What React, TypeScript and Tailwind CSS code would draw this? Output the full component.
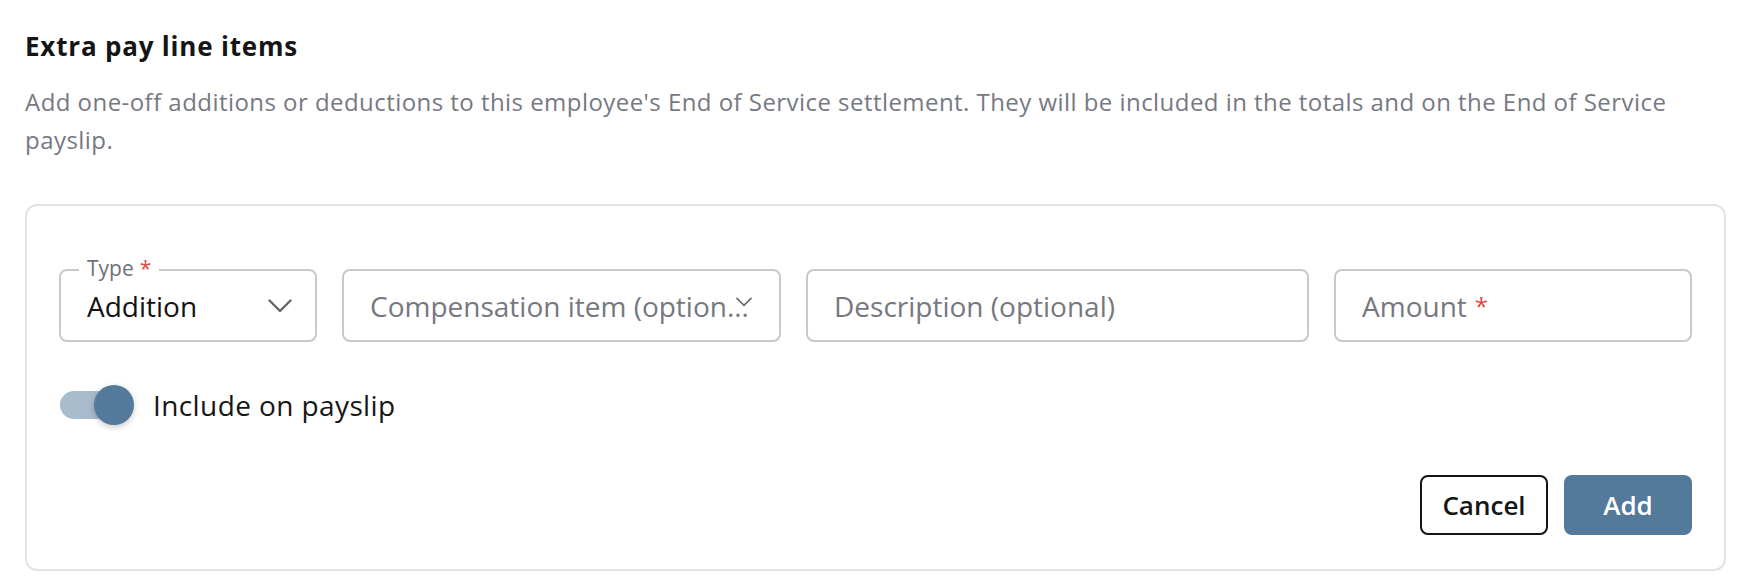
import { useState } from "react";

function Chevron({ className }: { className?: string }) {
    return (
        <svg viewBox="0 0 24 14" fill="none" className={className}>
            <path d="M1.5 1.5 L12 12 L22.5 1.5" stroke="currentColor" strokeWidth="2.4" strokeLinecap="round" strokeLinejoin="round" />
        </svg>
    );
}

function Required() {
    return <span className="ml-[8px] text-[#e0483e]">*</span>;
}

export default function App() {
    const [onPayslip, setOnPayslip] = useState(true);

    return (
        <div className="h-[584px] w-full bg-white pl-[25px] pr-[18px] pt-[30px] font-['Open_Sans',sans-serif]">
            <h2 className="text-[26px] font-bold leading-[32px] tracking-[0.8px] text-[#151515]">Extra pay line items</h2>
            <p className="mt-[21px] text-[24px] leading-[38px] tracking-[0.45px] text-[#767982]">
                Add one-off additions or deductions to this employee's End of Service settlement. They will be included in the totals and on the End of Service payslip.
            </p>

            <div className="mt-[45px] rounded-[12px] border-2 border-[#e3e3e3] px-[32px] pb-[34px] pt-[63px]">
                <div className="grid grid-cols-[258px_439px_503px_1fr] gap-[25px]">
                    <div className="relative flex h-[73px] items-center rounded-[8px] border-2 border-[#c9c9c9] pl-[26px] pr-[60px]">
                        <span className="absolute -top-[13px] left-[18px] bg-white px-[8px] text-[21px] leading-[21px] text-[#6d7079]">
                            Type<span className="ml-[6px] text-[#e0483e]">*</span>
                        </span>
                        <span className="text-[28px] text-[#121212]">Addition</span>
                        <Chevron className="absolute right-[23px] top-[28px] h-[14px] w-[24px] text-[#666666]" />
                    </div>

                    <div className="relative flex h-[73px] items-center rounded-[8px] border-2 border-[#c9c9c9] pl-[26px] pr-[27px]">
                        <span className="truncate text-[28px] text-[#76787f]">Compensation item (optional)</span>
                        <Chevron className="absolute right-[27px] top-[26px] h-[10px] w-[16px] text-[#6a6a6a]" />
                    </div>

                    <div className="flex h-[73px] items-center rounded-[8px] border-2 border-[#c9c9c9] px-[26px]">
                        <span className="text-[28px] text-[#76787f]">Description (optional)</span>
                    </div>

                    <div className="flex h-[73px] items-center rounded-[8px] border-2 border-[#c9c9c9] px-[26px]">
                        <span className="text-[28px] text-[#76787f]">
                            Amount
                            <span className="relative -top-[2px] text-[24px]">
                                <Required />
                            </span>
                        </span>
                    </div>
                </div>

                <div className="mt-[43px] flex h-[40px] items-center gap-[19px] pl-[1px]">
                    <button
                        type="button"
                        onClick={() => setOnPayslip(!onPayslip)}
                        className="relative h-[40px] w-[74px]"
                    >
                        <span
                            className={`absolute left-0 top-[6px] h-[28px] w-[68px] rounded-full ${onPayslip ? "bg-[#a9bccd]" : "bg-[#c4c4c4]"}`}
                        />
                        <span
                            className={`absolute top-0 h-[40px] w-[40px] rounded-full shadow-[0_2px_6px_rgba(0,0,0,0.22)] ${onPayslip ? "left-[34px] bg-[#537a9b]" : "left-0 bg-white"}`}
                        />
                    </button>
                    <span className="text-[28px] leading-[40px] tracking-[0.4px] text-[#161616]">Include on payslip</span>
                </div>

                <div className="mt-[50px] flex justify-end gap-[16px]">
                    <button
                        type="button"
                        className="h-[60px] w-[128px] rounded-[8px] border-2 border-[#151515] text-[26px] font-semibold text-[#151515]"
                    >
                        Cancel
                    </button>
                    <button
                        type="button"
                        className="h-[60px] w-[128px] rounded-[8px] bg-[#537a9b] text-[26px] font-semibold text-white"
                    >
                        Add
                    </button>
                </div>
            </div>
        </div>
    );
}
